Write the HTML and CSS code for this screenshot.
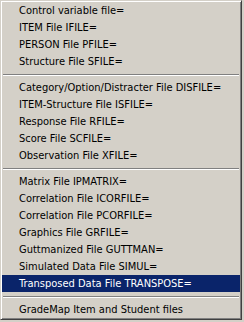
FILE: index.html
```html
<!DOCTYPE html>
<html>
<head>
<meta charset="UTF-8">
<title>File menu</title>
<link rel="stylesheet" href="styles.css">
</head>
<body>
<ul class="menu">
    <li class="item">Control variable file=</li>
    <li class="item">ITEM File IFILE=</li>
    <li class="item">PERSON File PFILE=</li>
    <li class="item">Structure File SFILE=</li>
    <li class="sep"></li>
    <li class="item">Category/Option/Distracter File DISFILE=</li>
    <li class="item">ITEM-Structure File ISFILE=</li>
    <li class="item">Response File RFILE=</li>
    <li class="item">Score File SCFILE=</li>
    <li class="item">Observation File XFILE=</li>
    <li class="sep"></li>
    <li class="item">Matrix File IPMATRIX=</li>
    <li class="item">Correlation File ICORFILE=</li>
    <li class="item">Correlation File PCORFILE=</li>
    <li class="item">Graphics File GRFILE=</li>
    <li class="item">Guttmanized File GUTTMAN=</li>
    <li class="item">Simulated Data File SIMUL=</li>
    <li class="item active">Transposed Data File TRANSPOSE=</li>
    <li class="sep"></li>
    <li class="item">GradeMap Item and Student files</li>
</ul>
</body>
</html>
```

FILE: styles.css
```css
html, body {
margin: 0;
padding: 0;
}

body {
background: #d4d0c8;
font-family: "DejaVu Sans Condensed", "DejaVu Sans", sans-serif;
font-size: 11px;
color: #000;
}

.menu {
list-style: none;
margin: 0;
padding: 1px;
width: 238px;
background: #d4d0c8;
border-style: solid;
border-width: 1px;
border-color: #d4d0c8 #404040 #404040 #d4d0c8;
box-shadow: inset 1px 1px 0 #fff, inset -1px -1px 0 #808080;
}

.item {
height: 17px;
line-height: 17px;
padding-left: 17px;
white-space: nowrap;
}

.item.active {
background: #0a246a;
color: #fff;
}

.sep {
height: 0;
margin: 4px 1px 3px 1px;
border-top: 1px solid #808080;
border-bottom: 1px solid #fff;
}
```
